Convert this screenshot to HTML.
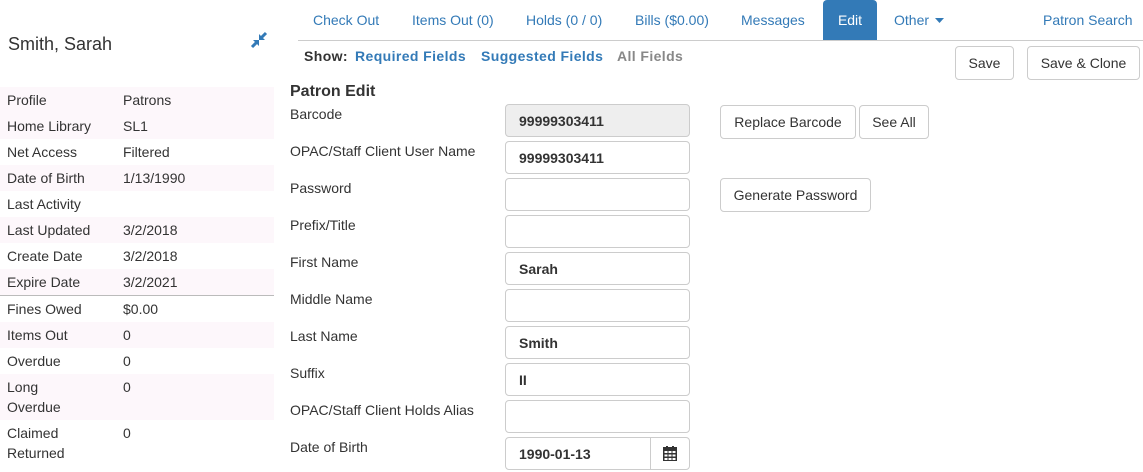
<!DOCTYPE html><html><head><style>
body{margin:0;width:1143px;height:472px;overflow:hidden;font-family:"Liberation Sans",Arial,sans-serif;font-size:14px;color:#333;background:#fff;position:relative}
.a{position:absolute}
.blue{color:#337ab7}
.row{position:absolute;left:0;width:274px;height:26px}
.row span{position:absolute;top:5px}
.pk{background:#fdf7fb}
.lbl{position:absolute;left:290px}
.inp{position:absolute;left:505px;width:183px;height:31px;border:1px solid #ccc;border-radius:4px;background:#fff;font-weight:bold;box-sizing:content-box}
.inp span{position:absolute;left:13px;top:8px}
.btn{position:absolute;border:1px solid #ccc;border-radius:4px;height:32px;line-height:32px;text-align:center;background:#fff;color:#333}
.sh{font-weight:bold;letter-spacing:0.4px}
</style></head><body>
<div class="a" style="left:8px;top:34px;font-size:18px">Smith, Sarah</div>
<svg class="a" style="left:250px;top:31px" width="18" height="18" viewBox="0 0 18 18"><path d="M2 16L7 11M16 2L11 7" stroke="#337ab7" stroke-width="3" fill="none"/><path d="M3 9h6v6z M15 9h-6v-6z" fill="#337ab7"/></svg>

<div class="row pk" style="top:87px"><span style="left:7px">Profile</span><span style="left:123px">Patrons</span></div>
<div class="row pk" style="top:113px"><span style="left:7px">Home Library</span><span style="left:123px">SL1</span></div>
<div class="row" style="top:139px"><span style="left:7px">Net Access</span><span style="left:123px">Filtered</span></div>
<div class="row pk" style="top:165px"><span style="left:7px">Date of Birth</span><span style="left:123px">1/13/1990</span></div>
<div class="row" style="top:191px"><span style="left:7px">Last Activity</span></div>
<div class="row pk" style="top:217px"><span style="left:7px">Last Updated</span><span style="left:123px">3/2/2018</span></div>
<div class="row" style="top:243px"><span style="left:7px">Create Date</span><span style="left:123px">3/2/2018</span></div>
<div class="row pk" style="top:269px"><span style="left:7px">Expire Date</span><span style="left:123px">3/2/2021</span></div>
<div class="a" style="left:0;top:295px;width:274px;height:1px;background:#bbb"></div>
<div class="row" style="top:296px"><span style="left:7px">Fines Owed</span><span style="left:123px">$0.00</span></div>
<div class="row pk" style="top:322px"><span style="left:7px">Items Out</span><span style="left:123px">0</span></div>
<div class="row" style="top:348px"><span style="left:7px">Overdue</span><span style="left:123px">0</span></div>
<div class="row pk" style="top:374px;height:46px"><span style="left:7px;line-height:20px;top:3px">Long<br>Overdue</span><span style="left:123px">0</span></div>
<div class="row" style="top:420px;height:46px"><span style="left:7px;line-height:20px;top:3px">Claimed<br>Returned</span><span style="left:123px">0</span></div>

<div class="a blue" style="left:313px;top:12px">Check Out</div>
<div class="a blue" style="left:412px;top:12px">Items Out (0)</div>
<div class="a blue" style="left:526px;top:12px">Holds (0 / 0)</div>
<div class="a blue" style="left:635px;top:12px">Bills ($0.00)</div>
<div class="a blue" style="left:741px;top:12px">Messages</div>
<div class="a" style="left:823px;top:0;width:54px;height:40px;background:#337ab7;border-radius:4px 4px 0 0;color:#fff;text-align:center;line-height:40px">Edit</div>
<div class="a blue" style="left:894px;top:12px">Other</div>
<svg class="a" style="left:935px;top:18px" width="9" height="5"><path d="M0 0h9L4.5 5z" fill="#337ab7"/></svg>
<div class="a blue" style="left:1043px;top:12px">Patron Search</div>
<div class="a" style="left:298px;top:40px;width:845px;height:1px;background:#ccc"></div>

<div class="a sh" style="left:304px;top:48px">Show:</div>
<div class="a blue sh" style="left:355px;top:48px">Required Fields</div>
<div class="a blue sh" style="left:481px;top:48px">Suggested Fields</div>
<div class="a sh" style="left:617px;top:48px;color:#888">All Fields</div>
<div class="btn" style="left:955px;top:46px;width:57px">Save</div>
<div class="btn" style="left:1027px;top:46px;width:111px">Save &amp; Clone</div>
<div class="a" style="left:290px;top:83px;font-size:16px;font-weight:bold">Patron Edit</div>

<div class="lbl" style="top:106px">Barcode</div>
<div class="inp" style="top:104px;background:#eee"><span>99999303411</span></div>
<div class="lbl" style="top:143px">OPAC/Staff Client User Name</div>
<div class="inp" style="top:141px"><span>99999303411</span></div>
<div class="lbl" style="top:180px">Password</div>
<div class="inp" style="top:178px"></div>
<div class="lbl" style="top:217px">Prefix/Title</div>
<div class="inp" style="top:215px"></div>
<div class="lbl" style="top:254px">First Name</div>
<div class="inp" style="top:252px"><span>Sarah</span></div>
<div class="lbl" style="top:291px">Middle Name</div>
<div class="inp" style="top:289px"></div>
<div class="lbl" style="top:328px">Last Name</div>
<div class="inp" style="top:326px"><span>Smith</span></div>
<div class="lbl" style="top:365px">Suffix</div>
<div class="inp" style="top:363px"><span>II</span></div>
<div class="lbl" style="top:402px">OPAC/Staff Client Holds Alias</div>
<div class="inp" style="top:400px"></div>
<div class="lbl" style="top:439px">Date of Birth</div>
<div class="inp" style="top:437px"><span>1990-01-13</span><div class="a" style="left:144px;top:0;width:1px;height:31px;background:#ccc"></div>
<svg class="a" style="left:157px;top:8px" width="14" height="15" viewBox="0 0 14 15"><rect x="0" y="1" width="14" height="14" fill="#333"/><rect x="3" y="0" width="2" height="3" fill="#333"/><rect x="9" y="0" width="2" height="3" fill="#333"/><g fill="#fff"><rect x="1.5" y="5" width="3" height="2"/><rect x="5.5" y="5" width="3" height="2"/><rect x="9.5" y="5" width="3" height="2"/><rect x="1.5" y="8.5" width="3" height="2"/><rect x="5.5" y="8.5" width="3" height="2"/><rect x="9.5" y="8.5" width="3" height="2"/><rect x="1.5" y="12" width="3" height="2"/><rect x="5.5" y="12" width="3" height="2"/><rect x="9.5" y="12" width="3" height="2"/></g></svg></div>

<div class="btn" style="left:720px;top:105px;width:134px">Replace Barcode</div>
<div class="btn" style="left:859px;top:105px;width:68px">See All</div>
<div class="btn" style="left:720px;top:178px;width:149px">Generate Password</div>
</body></html>
